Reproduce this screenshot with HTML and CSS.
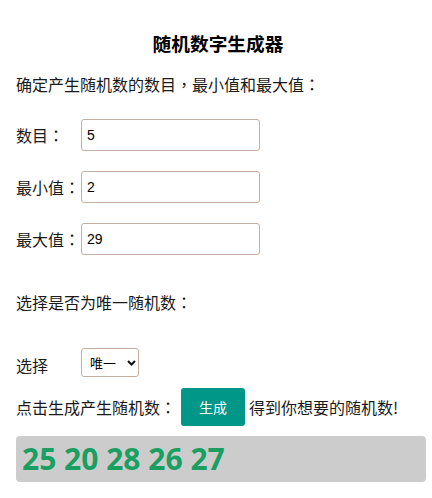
FILE: index.html
```html
<!DOCTYPE html>
<html lang="zh-CN">
<head>
<meta charset="utf-8">
<title>随机数字生成器</title>
<link rel="stylesheet" href="styles.css">
</head>
<body>
<div class="page">
  <h1 class="title">随机数字生成器</h1>
  <p class="intro">确定产生随机数的数目<span class="pn" lang="zh-TW">，</span>最小值和最大值<span class="pn" lang="zh-TW">：</span></p>
  <div class="fields">
    <div class="row"><span class="label">数目<span class="pn" lang="zh-TW">：</span></span><input class="field" type="text" value="5"></div>
    <div class="row"><span class="label">最小值<span class="pn" lang="zh-TW">：</span></span><input class="field" type="text" value="2"></div>
    <div class="row"><span class="label">最大值<span class="pn" lang="zh-TW">：</span></span><input class="field" type="text" value="29"></div>
  </div>
  <p class="intro second">选择是否为唯一随机数<span class="pn" lang="zh-TW">：</span></p>
  <div class="row select-row">
    <span class="label">选择</span>
    <span class="select-wrap">
      <select class="choice"><option>唯一</option><option>不唯一</option></select>
      <svg class="chev" width="9" height="6" viewBox="0 0 9 6"><path d="M1 1 L4.5 4.5 L8 1" fill="none" stroke="#111" stroke-width="2"/></svg>
    </span>
  </div>
  <div class="action-row">
    <span>点击生成产生随机数<span class="pn" lang="zh-TW">：</span></span>
    <button class="gen">生成</button>
    <span>得到你想要的随机数!</span>
  </div>
  <div class="result">25 20 28 26 27</div>
</div>
</body>
</html>
```
FILE: styles.css
```css
html, body {
  margin: 0;
  background: #fff;
}
.page {
  padding: 29px 6px 0 16px;
  font-family: "Noto Sans CJK SC", "Noto Sans", sans-serif;
  font-size: 16px;
  color: #1a1a1a;
  text-spacing-trim: space-all;
}
.pn {
  font-family: "Noto Sans CJK TC", sans-serif;
}
.title {
  margin: 0 -6px 0 -12px;
  font-size: 18.7px;
  line-height: 28px;
  font-weight: 700;
  text-align: center;
  color: #000;
}
.intro {
  margin: 15px 0 0;
  line-height: 24px;
}
.intro.second {
  margin-top: 35px;
}
.fields {
  margin-top: 23px;
  display: flex;
  flex-direction: column;
  gap: 20px;
}
.row {
  display: flex;
  align-items: center;
}
.label {
  width: 65px;
  flex: none;
  line-height: 24px;
}
.field {
  box-sizing: border-box;
  width: 179px;
  height: 32px;
  border: 1px solid #c6afa2;
  border-radius: 3px;
  padding: 0 5px;
  font-family: "Liberation Sans", Arial, sans-serif;
  font-size: 14px;
  color: #000;
  background: #fff;
  outline: none;
}
.select-row {
  margin-top: 34px;
  align-items: flex-end;
}
.select-wrap {
  position: relative;
  display: inline-block;
  height: 29px;
}
.choice {
  appearance: none;
  -webkit-appearance: none;
  box-sizing: border-box;
  width: 58px;
  height: 29px;
  border: 1px solid #c6afa2;
  border-radius: 3px;
  padding: 0 0 0 8px;
  font-family: "Noto Sans CJK SC", sans-serif;
  font-size: 13px;
  color: #000;
  background: #fff;
  outline: none;
}
.chev {
  position: absolute;
  left: 46px;
  top: 12px;
  pointer-events: none;
}
.action-row {
  margin-top: 11px;
  display: flex;
  align-items: center;
  line-height: 24px;
}
.gen {
  width: 64px;
  height: 38px;
  margin: 0 4px 0 5px;
  border: none;
  border-radius: 3px;
  background: #009688;
  color: #fff;
  font-family: "Noto Sans CJK SC", sans-serif;
  font-size: 14px;
  padding: 0;
}
.result {
  margin-top: 10px;
  height: 46px;
  line-height: 46px;
  padding-left: 6px;
  background: #cccccc;
  border-radius: 4px;
  font-family: "Open Sans", sans-serif;
  font-weight: 700;
  font-size: 30px;
  color: #1a9f63;
}
```
